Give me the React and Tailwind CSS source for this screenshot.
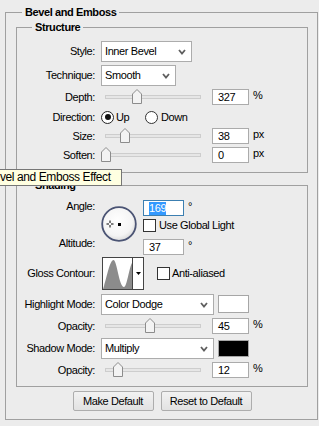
import React from 'react';

function Chevron() {
  return (
    <svg width="8" height="6" viewBox="0 0 8 6" className="shrink-0">
      <polyline points="1,1 4,4.5 7,1" fill="none" stroke="#5f5f5f" strokeWidth="1.8" />
    </svg>
  );
}

function Select({ w, children }) {
  return (
    <div className={`flex items-center h-[21px] border border-[#acacac] bg-white pl-[3px] pr-[5px] ${w}`}>
      <span className="flex-1">{children}</span>
      <Chevron />
    </div>
  );
}

function Field({ w = 'w-[37px]', children }) {
  return (
    <div className={`h-[16px] border border-[#ababab] bg-white pl-[5px] leading-[14px] ${w}`}>
      {children}
    </div>
  );
}

function Slider({ pos }) {
  return (
    <div className="relative flex items-center w-[104px] h-[16px]">
      <div className="flex-1 mx-[4px] h-[4px] border border-[#cdcdcd] bg-[#e6e6e6]" />
      <svg className="absolute top-0" style={{ left: pos }} width="10" height="15" viewBox="0 0 10 15">
        <path d="M0.5 5 L5 0.5 L9.5 5 V14.5 H0.5 Z" fill="#f3f3f3" stroke="#8c8c8c" />
      </svg>
    </div>
  );
}

function Label({ children }) {
  return <div className="w-[79px] shrink-0 text-right pr-[1px]">{children}</div>;
}

function SliderRow({ label, pos, value, unit, className = '' }) {
  return (
    <div className={`flex items-center h-[16px] ${className}`}>
      <Label>{label}</Label>
      <div className="ml-[5px]">
        <Slider pos={pos} />
      </div>
      <div className="ml-[7px]">
        <Field>{value}</Field>
      </div>
      <span className="ml-[4px] self-start">{unit}</span>
    </div>
  );
}

function Box() {
  return <div className="w-[13px] h-[13px] shrink-0 border border-[#333] bg-white" />;
}

function AngleDial() {
  return (
    <svg width="36" height="36" viewBox="0 0 36 36" className="shrink-0">
      <defs>
        <radialGradient id="dial" cx="45%" cy="40%" r="60%">
          <stop offset="0%" stopColor="#ffffff" />
          <stop offset="75%" stopColor="#f4f4f4" />
          <stop offset="100%" stopColor="#dcdcdc" />
        </radialGradient>
      </defs>
      <circle cx="18" cy="18" r="16.8" fill="url(#dial)" stroke="#4b5474" strokeWidth="1.8" />
      {/* cursor crosshair */}
      <path d="M9 14.5 V17 M9 19 V21.5 M5.5 18 H8 M10 18 H12.5" stroke="#000" strokeWidth="1" />
      <rect x="17" y="17" width="3" height="3" fill="#000" />
    </svg>
  );
}

function ContourPicker() {
  return (
    <div className="flex w-[42px] h-[33px] border border-[#444] bg-white">
      <svg width="29" height="31" viewBox="0 0 29 31" className="shrink-0">
        <path d="M0 31 L1 28 C4 18 7 2 10.5 2 C14 2 16 29 21 29 C24 29 26 10 29 5 L29 31 Z" fill="#8c8c8c" />
      </svg>
      <div className="flex-1 flex items-center justify-center border-l border-[#444]">
        <svg width="5" height="3" viewBox="0 0 5 3">
          <path d="M0 0 H5 L2.5 3 Z" fill="#000" />
        </svg>
      </div>
    </div>
  );
}

export default function App() {
  return (
    <div className="relative w-[319px] h-[426px] overflow-hidden bg-[#ececec] pt-[5px] pl-[5px] text-[11px] leading-[13px] tracking-[-0.4px] text-black font-['Liberation_Sans',Arial,sans-serif]">
      <fieldset className="w-[313px] border border-[#a0a0a0]">
        <legend className="ml-[16px] px-[3px] leading-[15px] font-bold">Bevel and Emboss</legend>
        <div className="pl-[10px] pr-[9px] pb-[8px]">
          {/* Structure */}
          <fieldset className="border border-[#a0a0a0]">
            <legend className="ml-[15px] px-[3px] leading-[15px] font-bold">Structure</legend>
            <div className="pt-[6px] pb-[9px]">
              <div className="flex items-center h-[21px]">
                <Label>Style:</Label>
                <div className="ml-[5px]">
                  <Select w="w-[91px]">Inner Bevel</Select>
                </div>
              </div>
              <div className="flex items-center h-[21px] mt-[3px]">
                <Label>Technique:</Label>
                <div className="ml-[5px]">
                  <Select w="w-[75px]">Smooth</Select>
                </div>
              </div>
              <SliderRow label="Depth:" pos={31} value="327" unit="%" className="mt-[3px]" />
              <div className="flex items-center h-[16px] mt-[4px]">
                <Label>Direction:</Label>
                <div className="ml-[5px] flex items-center w-[44px]">
                  <div className="w-[13px] h-[13px] rounded-full border-[1.5px] border-[#222] bg-white flex items-center justify-center">
                    <div className="w-[6px] h-[6px] rounded-full bg-[#111]" />
                  </div>
                  <span className="ml-[2px]">Up</span>
                </div>
                <div className="w-[13px] h-[13px] rounded-full border border-[#333] bg-white" />
                <span className="ml-[3px]">Down</span>
              </div>
              <SliderRow label="Size:" pos={19} value="38" unit="px" className="mt-[3px]" />
              <SliderRow label="Soften:" pos={0} value="0" unit="px" className="mt-[3px]" />
            </div>
          </fieldset>

          {/* Shading */}
          <fieldset className="mt-[5px] border border-[#a0a0a0]">
            <legend className="ml-[15px] px-[3px] leading-[15px] font-bold">Shading</legend>
            <div className="pt-[7px] pb-[8px]">
              <div className="flex">
                <div className="w-[79px] shrink-0 flex flex-col text-right pr-[1px]">
                  <span>Angle:</span>
                  <span className="mt-[24px]">Altitude:</span>
                </div>
                <div className="ml-[5px] mt-[6px]">
                  <AngleDial />
                </div>
                <div className="ml-[6px] flex flex-col">
                  <div className="flex">
                    <div className="w-[41px] h-[16px] border border-[#3c7fb1] bg-white pl-[5px] pt-[1px]">
                      <span className="bg-[#3399ff] text-white leading-[13px] inline-block">169</span>
                    </div>
                    <span className="ml-[4px]">°</span>
                  </div>
                  <div className="flex items-center mt-[3px]">
                    <Box />
                    <span className="ml-[3px]">Use Global Light</span>
                  </div>
                  <div className="flex mt-[7px]">
                    <Field w="w-[41px]">37</Field>
                    <span className="ml-[4px]">°</span>
                  </div>
                </div>
              </div>

              <div className="flex items-center h-[33px] mt-[2px]">
                <Label>Gloss Contour:</Label>
                <div className="ml-[6px]">
                  <ContourPicker />
                </div>
                <div className="ml-[13px]">
                  <Box />
                </div>
                <span className="ml-[2px]">Anti-aliased</span>
              </div>

              <div className="flex items-center h-[21px] mt-[4px]">
                <Label>Highlight Mode:</Label>
                <div className="ml-[5px]">
                  <Select w="w-[113px]">Color Dodge</Select>
                </div>
                <div className="ml-[4px] self-start mt-[1px] w-[31px] h-[18px] border border-[#a6a6a6] bg-white" />
              </div>
              <SliderRow label="Opacity:" pos={44} value="45" unit="%" className="mt-[3px]" />

              <div className="flex items-center h-[21px] mt-[4px]">
                <Label>Shadow Mode:</Label>
                <div className="ml-[5px]">
                  <Select w="w-[113px]">Multiply</Select>
                </div>
                <div className="ml-[4px] self-start mt-[2px] w-[31px] h-[17px] border border-[#a6a6a6] bg-black" />
              </div>
              <SliderRow label="Opacity:" pos={12} value="12" unit="%" className="mt-[3px]" />
            </div>
          </fieldset>

          <div className="mt-[4px] flex justify-center gap-[7px]">
            <button className="w-[81px] h-[20px] rounded-[2px] border border-[#adadad] bg-linear-to-b from-[#f2f2f2] to-[#e2e2e2] leading-[18px]">
              Make Default
            </button>
            <button className="w-[91px] h-[20px] rounded-[2px] border border-[#adadad] bg-linear-to-b from-[#f2f2f2] to-[#e2e2e2] leading-[18px]">
              Reset to Default
            </button>
          </div>
        </div>
      </fieldset>

      {/* tooltip over the Shading header */}
      <div className="absolute top-[169px] left-[-18px] w-[140px] h-[17px] border border-[#767676] bg-[#ffffe1] pl-[3px] text-[12px] leading-[15px] whitespace-nowrap">
        Bevel and Emboss Effect
      </div>
    </div>
  );
}
